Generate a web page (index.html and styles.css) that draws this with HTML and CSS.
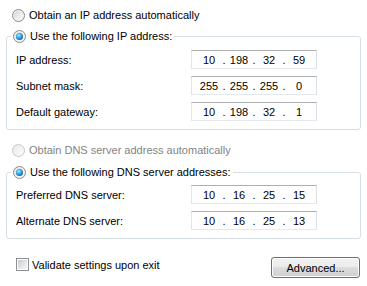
FILE: index.html
```html
<!DOCTYPE html>
<html>
<head>
<meta charset="utf-8">
<link rel="stylesheet" href="styles.css">
</head>
<body>
<div class="page">
  <div class="opt first"><span class="radio"></span><span>Obtain an IP address automatically</span></div>
  <fieldset class="group g1">
    <legend class="leg"><span class="opt"><span class="radio on"></span><span>Use the following IP address:</span></span></legend>
    <div class="rows">
      <div class="row"><span class="lbl">IP address:</span><span class="ip"><i>10</i><b>.</b><i>198</i><b>.</b><i>32</i><b>.</b><i>59</i></span></div>
      <div class="row"><span class="lbl">Subnet mask:</span><span class="ip"><i>255</i><b>.</b><i>255</i><b>.</b><i>255</i><b>.</b><i>0</i></span></div>
      <div class="row"><span class="lbl">Default gateway:</span><span class="ip"><i>10</i><b>.</b><i>198</i><b>.</b><i>32</i><b>.</b><i>1</i></span></div>
    </div>
  </fieldset>
  <div class="opt dns disabled"><span class="radio"></span><span>Obtain DNS server address automatically</span></div>
  <fieldset class="group g2">
    <legend class="leg"><span class="opt"><span class="radio on"></span><span>Use the following DNS server addresses:</span></span></legend>
    <div class="rows">
      <div class="row"><span class="lbl">Preferred DNS server:</span><span class="ip"><i>10</i><b>.</b><i>16</i><b>.</b><i>25</i><b>.</b><i>15</i></span></div>
      <div class="row"><span class="lbl">Alternate DNS server:</span><span class="ip"><i>10</i><b>.</b><i>16</i><b>.</b><i>25</i><b>.</b><i>13</i></span></div>
    </div>
  </fieldset>
  <div class="bottom">
    <div class="chk"><span class="box"></span><span>Validate settings upon exit</span></div>
    <button class="btn">Advanced...</button>
  </div>
</div>
</body>
</html>
```
FILE: styles.css
```css
html, body {
  margin: 0;
  padding: 0;
  background: #ffffff;
}
body {
  font-family: "Liberation Sans", Arial, sans-serif;
  font-size: 11px;
  color: #000000;
  width: 367px;
  height: 286px;
  overflow: hidden;
}
.page {
  padding: 9px 6px 0 6px;
}
.opt {
  display: flex;
  align-items: center;
  gap: 4px;
  height: 13px;
  line-height: 13px;
  white-space: nowrap;
}
.first {
  margin-left: 6px;
}
.radio {
  flex: none;
  box-sizing: border-box;
  width: 13px;
  height: 13px;
  border-radius: 50%;
  border: 1px solid #8b8b8b;
  background: linear-gradient(135deg, #cfcfcf 0%, #ececec 55%, #fcfcfc 100%);
  box-shadow: inset 0 0 0 1px #f4f4f4;
  position: relative;
}
.radio.on::after {
  content: "";
  position: absolute;
  left: 2px;
  top: 2px;
  width: 7px;
  height: 7px;
  border-radius: 50%;
  background: radial-gradient(circle at 40% 35%, #a6ecff 0%, #34a6e8 40%, #1a5f9c 75%, #163f6a 100%);
}
.disabled {
  color: #838383;
}
.disabled .radio {
  border-color: #c6c6c6;
  background: linear-gradient(135deg, #ebebeb 0%, #f5f5f5 60%, #fdfdfd 100%);
  box-shadow: none;
}
.group {
  margin: 0;
  padding: 0 0 8px 9px;
  border: 1px solid #d5dfe5;
  border-radius: 3px;
  min-width: 0;
}
.g1 {
  margin-top: 8px;
}
.g2 {
  margin-top: 9px;
}
.leg {
  padding: 0 2px;
  margin-left: -5px;
  height: 13px;
  line-height: 13px;
}
.rows {
  display: flex;
  flex-direction: column;
  gap: 7px;
}
.g1 .rows {
  padding-top: 7px;
}
.g2 .rows {
  padding-top: 6px;
}
.row {
  display: flex;
  align-items: center;
  height: 19px;
}
.lbl {
  width: 175px;
  flex: none;
}
.ip {
  box-sizing: border-box;
  width: 126px;
  height: 19px;
  display: flex;
  align-items: center;
  padding-left: 6px;
  border: 1px solid;
  border-color: #abadb3 #dbdfe6 #e3e9ef #e2e3ea;
  background: #ffffff;
}
.ip i {
  font-style: normal;
  width: 22px;
  text-align: center;
}
.ip b {
  font-weight: normal;
  width: 8px;
  text-align: center;
}
.dns {
  margin-top: 14px;
  margin-left: 6px;
}
.bottom {
  margin-top: 18px;
  display: flex;
  justify-content: space-between;
  align-items: flex-start;
}
.chk {
  display: flex;
  align-items: center;
  gap: 3px;
  margin-left: 10px;
  margin-top: 1px;
  height: 13px;
}
.box {
  box-sizing: border-box;
  width: 13px;
  height: 13px;
  border: 1px solid #8e8f8f;
  padding: 1px;
  background: linear-gradient(135deg, #c6cad0 0%, #e6e8ea 60%, #f7f7f7 100%) content-box, #ffffff;
}
.btn {
  box-sizing: border-box;
  width: 89px;
  height: 21px;
  margin: 0 1px 0 0;
  padding: 0;
  font-family: "Liberation Sans", Arial, sans-serif;
  font-size: 11px;
  color: #000000;
  border: 1px solid #707070;
  border-radius: 3px;
  background: linear-gradient(#f2f2f2 0%, #ebebeb 50%, #dddddd 50%, #cfcfcf 100%);
  box-shadow: inset 0 0 0 1px #fcfcfc;
}
```
